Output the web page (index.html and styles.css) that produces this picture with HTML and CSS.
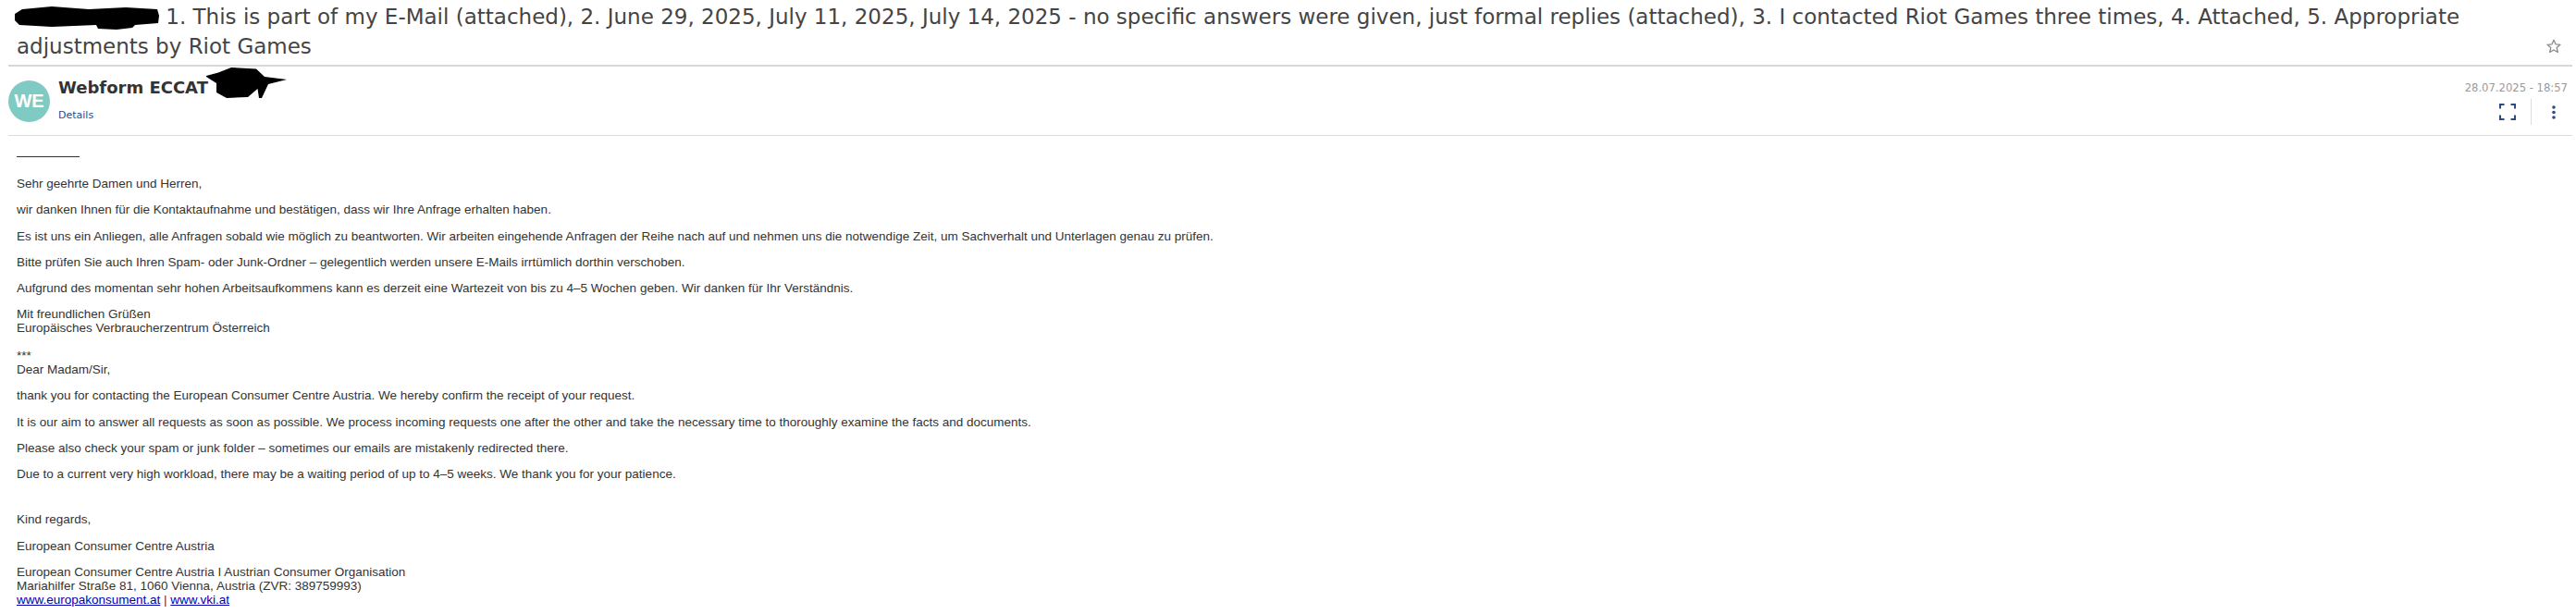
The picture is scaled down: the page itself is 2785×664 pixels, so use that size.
FILE: index.html
```html
<!DOCTYPE html>
<html lang="de">
<head>
<meta charset="utf-8">
<title>Webform ECCAT</title>
<link rel="stylesheet" href="styles.css">
</head>
<body>
<div class="mail">
  <header class="subject">
    <h1 class="subject-text"><svg class="blot-subject" width="156" height="25" viewBox="0 0 156 25"><path d="M0 8 L8 3 L40 0 L80 3 L120 1 L154 3 L156 10 L155 18 L130 20 L127 23 L110 25 L90 24 L88 20 L40 22 L5 20 L0 15 Z" fill="#000"/></svg> 1. This is part of my E-Mail (attached), 2. June 29, 2025, July 11, 2025, July 14, 2025 - no specific answers were given, just formal replies (attached), 3. I contacted Riot Games three times, 4. Attached, 5. Appropriate adjustments by Riot Games</h1>
    <svg class="star" width="16" height="16" viewBox="0 0 16 16"><path d="M8 1.2l2 4.6 5 .5-3.8 3.3 1.1 4.9L8 12l-4.3 2.5 1.1-4.9L1 6.3l5-.5z" fill="none" stroke="#8a8a8a" stroke-width="1.3" stroke-linejoin="round"/></svg>
  </header>
  <section class="sender">
    <div class="avatar">WE</div>
    <div class="who">
      <div class="name">Webform ECCAT<svg class="blot-name" width="87" height="34" viewBox="0 0 87 34"><path d="M0 9 L13 5.5 L27 0 L54 1.5 L63 10 L87 13 L67 18 L60 33 L57 33 L55.5 23 L45 32 L22 33 L11 27 L11 17 L0 10 Z" fill="#000"/></svg></div>
      <a class="details" href="#">Details</a>
    </div>
    <div class="meta">
      <div class="date">28.07.2025 - 18:57</div>
      <div class="actions">
        <svg class="act-full" width="18" height="18" viewBox="0 0 18 18"><path d="M1 5.5V1H5.5M12.5 1H17V5.5M17 12.5V17H12.5M5.5 17H1V12.5" fill="none" stroke="#2f4a7f" stroke-width="2"/></svg>
        <span class="act-sep"></span>
        <svg class="act-more" width="4" height="15" viewBox="0 0 4 15"><circle cx="2" cy="2" r="1.8" fill="#2f4a7f"/><circle cx="2" cy="7.5" r="1.8" fill="#2f4a7f"/><circle cx="2" cy="13" r="1.8" fill="#2f4a7f"/></svg>
      </div>
    </div>
  </section>
  <article class="body">
    <div class="rule"></div>
    <p>Sehr geehrte Damen und Herren,</p>
    <p>wir danken Ihnen für die Kontaktaufnahme und bestätigen, dass wir Ihre Anfrage erhalten haben.</p>
    <p>Es ist uns ein Anliegen, alle Anfragen sobald wie möglich zu beantworten. Wir arbeiten eingehende Anfragen der Reihe nach auf und nehmen uns die notwendige Zeit, um Sachverhalt und Unterlagen genau zu prüfen.</p>
    <p>Bitte prüfen Sie auch Ihren Spam- oder Junk-Ordner – gelegentlich werden unsere E-Mails irrtümlich dorthin verschoben.</p>
    <p>Aufgrund des momentan sehr hohen Arbeitsaufkommens kann es derzeit eine Wartezeit von bis zu 4–5 Wochen geben. Wir danken für Ihr Verständnis.</p>
    <p>Mit freundlichen Grüßen<br>Europäisches Verbraucherzentrum Österreich</p>
    <p class="tight">***<br>Dear Madam/Sir,</p>
    <p>thank you for contacting the European Consumer Centre Austria. We hereby confirm the receipt of your request.</p>
    <p>It is our aim to answer all requests as soon as possible. We process incoming requests one after the other and take the necessary time to thoroughly examine the facts and documents.</p>
    <p>Please also check your spam or junk folder – sometimes our emails are mistakenly redirected there.</p>
    <p>Due to a current very high workload, there may be a waiting period of up to 4–5 weeks. We thank you for your patience.</p>
    <p class="gap">Kind regards,</p>
    <p class="sign">European Consumer Centre Austria</p>
    <p>European Consumer Centre Austria I Austrian Consumer Organisation<br>Mariahilfer Straße 81, 1060 Vienna, Austria (ZVR: 389759993)<br><a href="#">www.europakonsument.at</a> | <a href="#">www.vki.at</a></p>
  </article>
</div>
</body>
</html>
```
FILE: styles.css
```css
html, body { margin: 0; padding: 0; background: #fff; }
body { overflow: hidden; height: 664px; }
.mail { margin: 0 4px 0 9px; }
.subject { position: relative; border-bottom: 2px solid #d8d8d8; padding: 2px 0 0 9px; height: 72px; box-sizing: border-box; }
.subject-text { margin: 0; font: 400 23px/32px "DejaVu Sans", Verdana, sans-serif; color: #444; width: 2700px; }
.blot-subject { vertical-align: -6px; margin-left: -2px; }
.star { position: absolute; right: 12px; top: 42px; }
.sender { display: flex; height: 75px; box-sizing: border-box; border-bottom: 1px solid #dcdcdc; }
.avatar { width: 45px; height: 45px; margin-top: 15px; border-radius: 50%; background: #7fcbc4; color: #fff; font: 700 20px/45px "Liberation Sans", Arial, sans-serif; text-align: center; flex: none; }
.who { margin-left: 9px; padding-top: 10px; }
.name { font: 700 18px/26px "DejaVu Sans", Verdana, sans-serif; color: #333; display: flex; height: 26px; }
.blot-name { margin-top: -9px; margin-left: -2px; }
.details { display: block; margin-top: 10px; font: 400 11px/14px "DejaVu Sans", Verdana, sans-serif; color: #2a4a8a; text-decoration: none; }
.meta { margin-left: auto; padding-right: 5px; text-align: right; padding-top: 15px; }
.date { font: 400 11.6px/16px "DejaVu Sans", Verdana, sans-serif; color: #999; }
.actions { display: flex; align-items: center; justify-content: flex-end; margin-top: 4px; }
.act-full { margin-right: 16px; }
.act-sep { width: 1px; height: 28px; background: #ddd; margin-right: 22px; }
.act-more { margin-right: 13px; }
.body { padding: 0 0 0 9px; font: 400 13.5px/15px "Liberation Sans", Arial, sans-serif; color: #333; }
.rule { width: 68px; height: 1px; background: #333; margin-top: 22px; }
.body p { margin: 13.3px 0 0; }
.body p:first-of-type { margin-top: 21px; }
.body p.tight { margin-top: 14.5px; }
.body p.gap { margin-top: 33.6px; }
.body p.sign { margin-top: 14.4px; }
.body a { color: #0000b0; }
```
